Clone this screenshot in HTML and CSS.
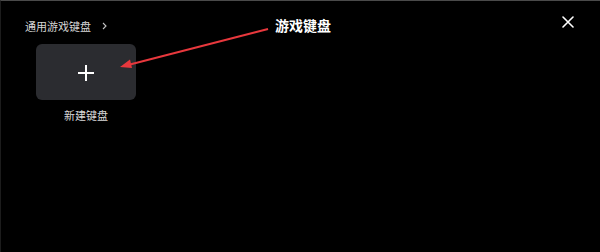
FILE: index.html
```html
<!DOCTYPE html>
<html lang="zh">
<head>
<meta charset="utf-8">
<link rel="stylesheet" href="styles.css">
</head>
<body>
<div class="panel">
  <header class="topbar">
    <div class="crumb"><span>通用游戏键盘</span><svg class="chev" width="5" height="8" viewBox="0 0 5 8"><path d="M1 1L4 4L1 7" fill="none" stroke="#c4c4c4" stroke-width="1.1"/></svg></div>
    <button class="close" aria-label="关闭">
      <svg width="12" height="12" viewBox="0 0 12 12"><path d="M1 1L11 11M11 1L1 11" stroke="#fff" stroke-width="1.6" stroke-linecap="round"/></svg>
    </button>
  </header>
  <div class="tiles">
    <div class="tile">
      <div class="card">
        <svg class="plus" width="18" height="18" viewBox="0 0 18 18"><path d="M9 1V17M1 9H17" stroke="#fff" stroke-width="2"/></svg>
      </div>
      <div class="label">新建键盘</div>
    </div>
  </div>
  <div class="annot">
    <svg class="arrow" width="600" height="252" viewBox="0 0 600 252">
      <line x1="268" y1="29" x2="128" y2="65" stroke="#e8383d" stroke-width="2"/>
      <path d="M120 67L130 59.5L132 68Z" fill="#e8383d"/>
    </svg>
    <span class="note">游戏键盘</span>
  </div>
</div>
</body>
</html>
```
FILE: styles.css
```css
html, body {
  margin: 0;
  padding: 0;
  background: #000;
}
.panel {
  position: relative;
  width: 600px;
  height: 252px;
  box-sizing: border-box;
  border-top: 1px solid #4a4a4a;
  border-left: 1px solid #1c1c1c;
  background: #000;
  font-family: "Noto Sans CJK SC", "Noto Sans", sans-serif;
  overflow: hidden;
}
.topbar {
  display: flex;
  justify-content: space-between;
  align-items: flex-start;
  padding: 15px 26px 0 24px;
  height: 18px;
}
.crumb {
  display: flex;
  align-items: center;
  gap: 11px;
  margin-top: 2px;
  font-size: 11px;
  color: #d6d6d6;
  line-height: 16px;
}
.chev {
  display: block;
}
.close {
  background: none;
  border: none;
  padding: 0;
  width: 12px;
  height: 12px;
  display: flex;
}
.tiles {
  display: flex;
  padding: 10px 0 0 35px;
}
.tile {
  display: flex;
  flex-direction: column;
  align-items: center;
  gap: 8px;
}
.card {
  width: 100px;
  height: 56px;
  border-radius: 6px;
  background: #2b2c30;
  display: flex;
  align-items: center;
  justify-content: center;
}
.plus {
  margin-top: 2px;
}
.label {
  font-size: 11px;
  color: #d8d8d8;
  line-height: 14px;
}
.annot {
  position: absolute;
  inset: -1px 0 0 -1px;
  pointer-events: none;
}
.arrow {
  position: absolute;
  left: 0;
  top: 0;
}
.note {
  position: absolute;
  left: 275px;
  top: 15px;
  font-size: 14px;
  font-weight: 700;
  color: #fff;
  line-height: 20px;
}
```
